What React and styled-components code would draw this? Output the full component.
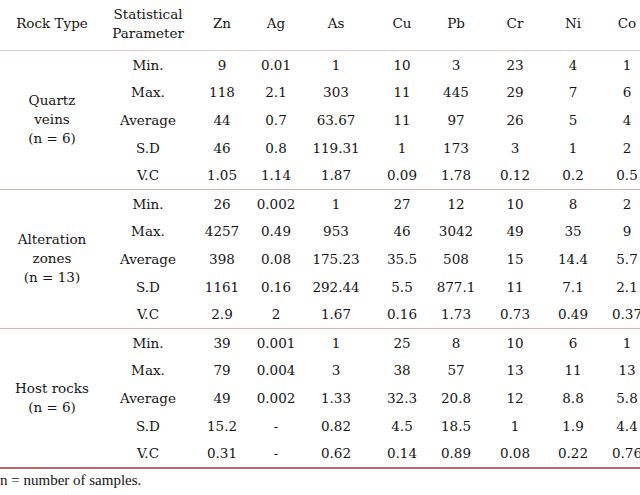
import React from 'react'
import styled, { createGlobalStyle } from 'styled-components'

const GlobalStyle = createGlobalStyle`
  body {
    margin: 0;
    background: #ffffff;
  }
`

const columns = [104, 88, 60, 48, 72, 60, 48, 70, 46, 62]
const elements = ['Zn', 'Ag', 'As', 'Cu', 'Pb', 'Cr', 'Ni', 'Co']
const stats = ['Min.', 'Max.', 'Average', 'S.D', 'V.C']

const groups = [
  {
    label: ['Quartz', 'veins', '(n = 6)'],
    rows: [
      ['9', '0.01', '1', '10', '3', '23', '4', '1'],
      ['118', '2.1', '303', '11', '445', '29', '7', '6'],
      ['44', '0.7', '63.67', '11', '97', '26', '5', '4'],
      ['46', '0.8', '119.31', '1', '173', '3', '1', '2'],
      ['1.05', '1.14', '1.87', '0.09', '1.78', '0.12', '0.2', '0.5'],
    ],
  },
  {
    label: ['Alteration', 'zones', '(n = 13)'],
    rows: [
      ['26', '0.002', '1', '27', '12', '10', '8', '2'],
      ['4257', '0.49', '953', '46', '3042', '49', '35', '9'],
      ['398', '0.08', '175.23', '35.5', '508', '15', '14.4', '5.7'],
      ['1161', '0.16', '292.44', '5.5', '877.1', '11', '7.1', '2.1'],
      ['2.9', '2', '1.67', '0.16', '1.73', '0.73', '0.49', '0.37'],
    ],
  },
  {
    label: ['Host rocks', '(n = 6)'],
    rows: [
      ['39', '0.001', '1', '25', '8', '10', '6', '1'],
      ['79', '0.004', '3', '38', '57', '13', '11', '13'],
      ['49', '0.002', '1.33', '32.3', '20.8', '12', '8.8', '5.8'],
      ['15.2', '-', '0.82', '4.5', '18.5', '1', '1.9', '4.4'],
      ['0.31', '-', '0.62', '0.14', '0.89', '0.08', '0.22', '0.76'],
    ],
  },
]

const Page = styled.div`
  width: 640px;
  overflow: hidden;
  color: #141414;
`

const Table = styled.table`
  width: ${columns.reduce((a, b) => a + b, 0)}px;
  table-layout: fixed;
  border-collapse: collapse;
  font-family: "DejaVu Serif", "Liberation Serif", serif;
  font-size: 13.5px;
`

const Col = styled.col`
  width: ${(p) => p.$w}px;
`

const Head = styled.th`
  height: 47px;
  padding: 0 0 3px;
  font-weight: normal;
  line-height: 19px;
  text-align: center;
  vertical-align: middle;
  border-bottom: 1.5px solid #e6cccc;
`

const Group = styled.tbody`
  border-bottom: ${(p) => (p.$last ? '2px solid #b86a6a' : '1.5px solid #dcaeae')};
`

const Cell = styled.td`
  height: 27.6px;
  padding: 0;
  text-align: center;
  vertical-align: middle;
  white-space: nowrap;
`

const RockCell = styled(Cell)`
  line-height: 19px;
  white-space: normal;
`

const Note = styled.p`
  margin: 0;
  padding-top: 1px;
  font-family: "Liberation Serif", serif;
  font-size: 15px;
  line-height: 20px;
`

export default function App() {
  return (
    <Page>
      <GlobalStyle />
      <Table>
        <colgroup>
          {columns.map((w, i) => (
            <Col key={i} $w={w} />
          ))}
        </colgroup>
        <thead>
          <tr>
            <Head>Rock Type</Head>
            <Head>
              Statistical
              <br />
              Parameter
            </Head>
            {elements.map((el) => (
              <Head key={el}>{el}</Head>
            ))}
          </tr>
        </thead>
        {groups.map((g, gi) => (
          <Group key={gi} $last={gi === groups.length - 1}>
            {g.rows.map((row, ri) => (
              <tr key={ri}>
                {ri === 0 && (
                  <RockCell rowSpan={5}>
                    {g.label.map((line, li) => (
                      <div key={li}>{line}</div>
                    ))}
                  </RockCell>
                )}
                <Cell>{stats[ri]}</Cell>
                {row.map((v, vi) => (
                  <Cell key={vi}>{v}</Cell>
                ))}
              </tr>
            ))}
          </Group>
        ))}
      </Table>
      <Note>n = number of samples.</Note>
    </Page>
  )
}
